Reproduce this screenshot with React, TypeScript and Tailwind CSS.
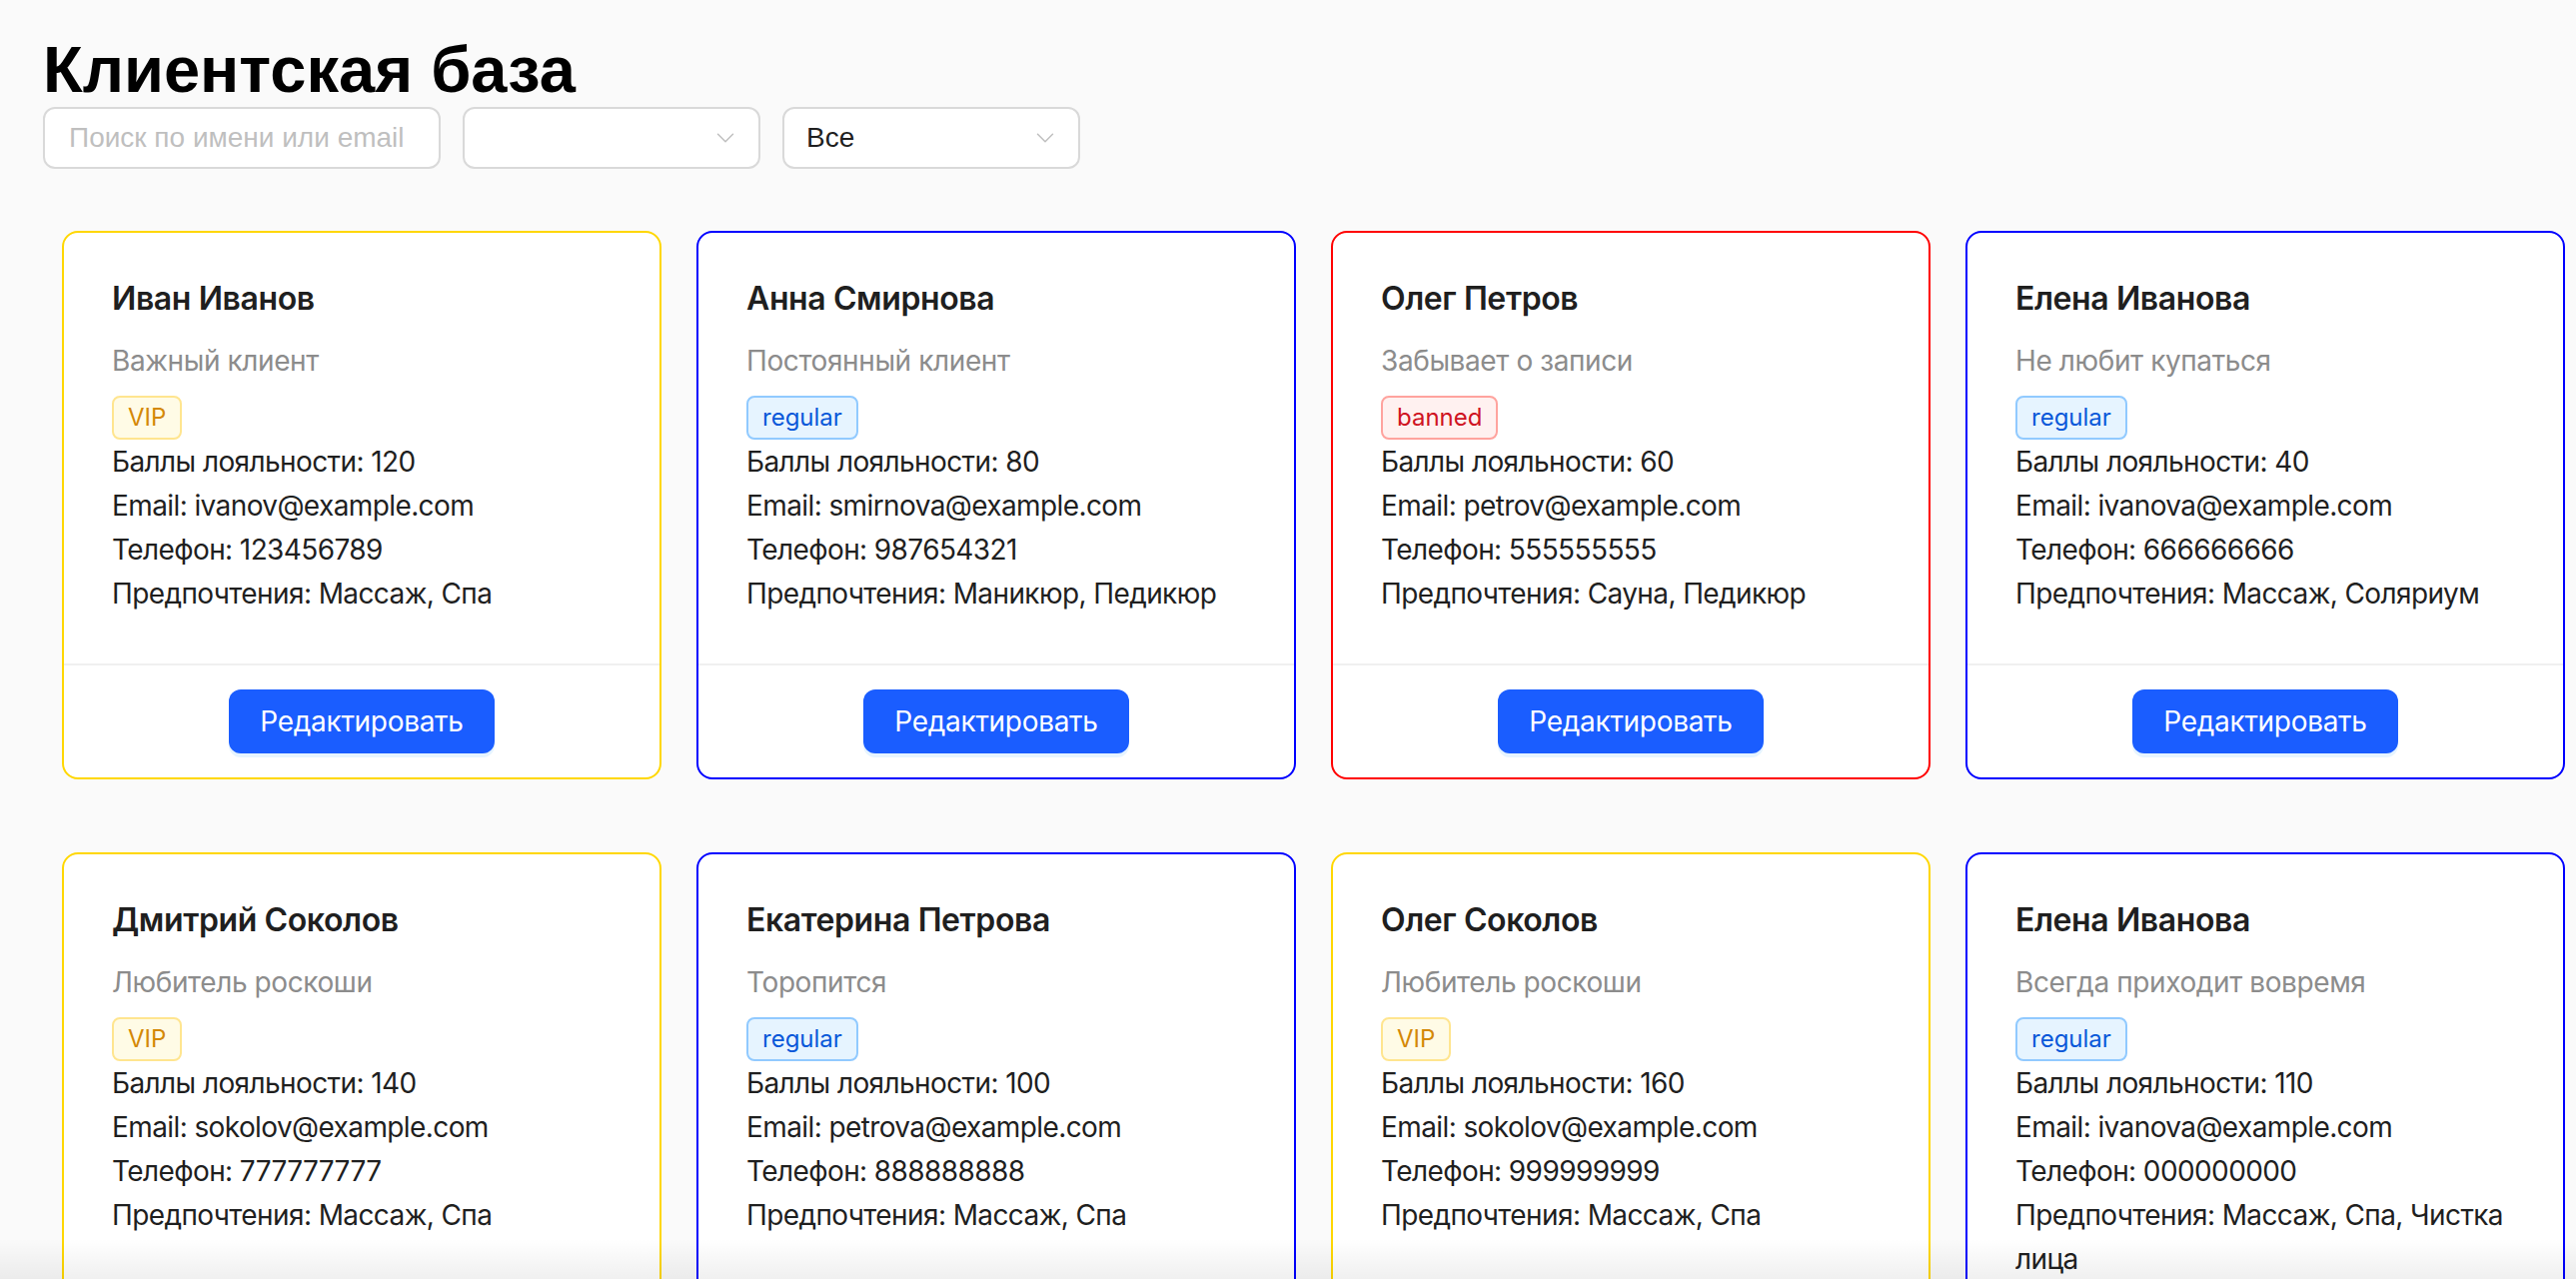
import { ChevronDown } from 'lucide-react';

type Status = 'VIP' | 'regular' | 'banned';

interface Client {
  id: number;
  name: string;
  note: string;
  status: Status;
  points: number;
  email: string;
  phone: string;
  prefs: string[];
}

const clients: Client[] = [
  { id: 1, name: 'Иван Иванов', note: 'Важный клиент', status: 'VIP', points: 120, email: 'ivanov@example.com', phone: '123456789', prefs: ['Массаж', 'Спа'] },
  { id: 2, name: 'Анна Смирнова', note: 'Постоянный клиент', status: 'regular', points: 80, email: 'smirnova@example.com', phone: '987654321', prefs: ['Маникюр', 'Педикюр'] },
  { id: 3, name: 'Олег Петров', note: 'Забывает о записи', status: 'banned', points: 60, email: 'petrov@example.com', phone: '555555555', prefs: ['Сауна', 'Педикюр'] },
  { id: 4, name: 'Елена Иванова', note: 'Не любит купаться', status: 'regular', points: 40, email: 'ivanova@example.com', phone: '666666666', prefs: ['Массаж', 'Соляриум'] },
  { id: 5, name: 'Дмитрий Соколов', note: 'Любитель роскоши', status: 'VIP', points: 140, email: 'sokolov@example.com', phone: '777777777', prefs: ['Массаж', 'Спа'] },
  { id: 6, name: 'Екатерина Петрова', note: 'Торопится', status: 'regular', points: 100, email: 'petrova@example.com', phone: '888888888', prefs: ['Массаж', 'Спа'] },
  { id: 7, name: 'Олег Соколов', note: 'Любитель роскоши', status: 'VIP', points: 160, email: 'sokolov@example.com', phone: '999999999', prefs: ['Массаж', 'Спа'] },
  { id: 8, name: 'Елена Иванова', note: 'Всегда приходит вовремя', status: 'regular', points: 110, email: 'ivanova@example.com', phone: '000000000', prefs: ['Массаж', 'Спа', 'Чистка лица'] },
];

// card border + tag colours per status
const cardBorder: Record<Status, string> = {
  VIP: 'border-[#ffd700]',
  regular: 'border-[#0000ff]',
  banned: 'border-[#ff0000]',
};

const tagStyle: Record<Status, string> = {
  VIP: 'bg-[#fffbe6] border-[#ffe58f] text-[#d48806]',
  regular: 'bg-[#e6f4ff] border-[#91caff] text-[#0958d9]',
  banned: 'bg-[#fff1f0] border-[#ffa39e] text-[#cf1322]',
};

function SelectBox({ value }: { value?: string }) {
  return (
    <div className="w-[298px] h-[62px] bg-white border-2 border-[#d9d9d9] rounded-[12px] flex items-center justify-between pl-[22px] pr-[18px]">
      <span className="text-[28px] text-[#1f1f1f] font-['Liberation_Sans',Arial,sans-serif]">{value}</span>
      <ChevronDown className="w-[30px] h-[30px] text-[#bfbfbf]" strokeWidth={1.2} />
    </div>
  );
}

function ClientCard({ client }: { client: Client }) {
  return (
    <div className={`bg-white border-2 rounded-[16px] ${cardBorder[client.status]}`}>
      <div className="p-[48px]">
        <div className="text-[32px] leading-[36px] font-semibold tracking-[-0.4px] text-[#1f1f1f]">{client.name}</div>
        <div className="mt-[22px] text-[28px] leading-[44px] tracking-[-0.4px] text-[#8c8c8c]">{client.note}</div>
        <span className={`mt-[13px] inline-block h-[44px] px-[14px] border-2 rounded-[8px] text-[24px] leading-[40px] ${tagStyle[client.status]}`}>
          {client.status}
        </span>
        <div className="text-[28px] leading-[44px] tracking-[-0.6px] text-[#1f1f1f]">
          <div>Баллы лояльности: {client.points}</div>
          <div>Email: {client.email}</div>
          <div>Телефон: {client.phone}</div>
          <div>Предпочтения: {client.prefs.join(', ')}</div>
        </div>
      </div>
      <div className="border-t-2 border-[#f0f0f0] py-[24px] flex justify-center">
        <button className="w-[266px] h-[64px] rounded-[12px] bg-[#1a5dff] text-white text-[28px] tracking-[-0.3px] shadow-[0_4px_0_rgba(5,145,255,0.1)]">
          Редактировать
        </button>
      </div>
    </div>
  );
}

export default function App() {
  return (
    <div className="relative h-screen overflow-hidden bg-[#fafafa] pt-[33px] pl-[43px] font-['Inter',sans-serif]">
      <h1 className="text-[65px] leading-[74px] font-bold text-black font-['Liberation_Sans',Arial,sans-serif]">
        Клиентская база
      </h1>

      {/* Filters */}
      <div className="flex gap-[22px]">
        <input
          type="text"
          placeholder="Поиск по имени или email"
          className="w-[398px] h-[62px] bg-white border-2 border-[#d9d9d9] rounded-[12px] px-[24px] text-[28px] font-['Liberation_Sans',Arial,sans-serif] placeholder:text-[#bfbfbf] outline-none"
        />
        <SelectBox />
        <SelectBox value="Все" />
      </div>

      {/* Client cards */}
      <div className="mt-[62px] pl-[19px] grid grid-cols-[repeat(4,600px)] gap-x-[35px] gap-y-[73px] items-start">
        {clients.map((client) => (
          <ClientCard key={client.id} client={client} />
        ))}
      </div>

      {/* window bottom shadow */}
      <div className="pointer-events-none absolute inset-x-0 bottom-0 h-[40px] bg-gradient-to-b from-transparent to-[#000000]/[0.06]" />
    </div>
  );
}
